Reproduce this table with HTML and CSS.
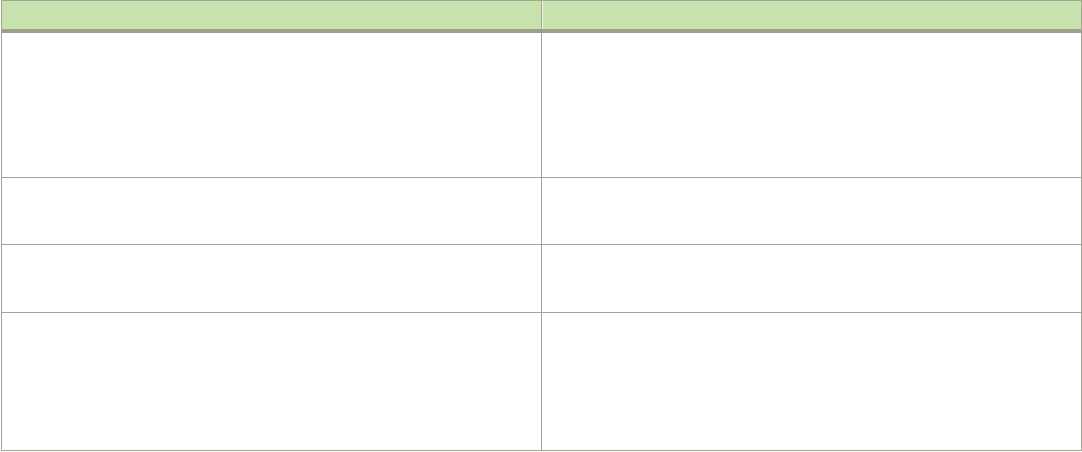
FILE: index.html
```html
<!DOCTYPE html>
<html>
<head>
<meta charset="utf-8">
<link rel="stylesheet" href="styles.css">
</head>
<body>
<div class="table">
  <div class="row head">
    <div class="cell"></div>
    <div class="cell"></div>
  </div>
  <div class="row r1">
    <div class="cell"></div>
    <div class="cell"></div>
  </div>
  <div class="row r2">
    <div class="cell"></div>
    <div class="cell"></div>
  </div>
  <div class="row r3">
    <div class="cell"></div>
    <div class="cell"></div>
  </div>
  <div class="row r4">
    <div class="cell"></div>
    <div class="cell"></div>
  </div>
</div>
</body>
</html>
```

FILE: styles.css
```css
html, body {
  margin: 0;
  padding: 0;
  background: #ffffff;
  font-family: "Liberation Sans", Arial, sans-serif;
}
.table {
  margin-left: 1px;
  width: 1081px;
  box-sizing: border-box;
  border: 1px solid #a3a493;
  border-top-color: #a3a493;
}
.row {
  display: grid;
  grid-template-columns: 540px 1fr;
  border-bottom: 1px solid #a3a493;
}
.row:last-child {
  border-bottom: none;
}
.cell {
  border-right: 1px solid #a3a493;
}
.cell:last-child {
  border-right: none;
}
.head {
  height: 28px;
  background: #c7e2ac;
  border-bottom: 4px solid #9da08d;
}
.head .cell:last-child {
  border-left: 1px solid #eef5e6;
}
.r1 { height: 144px; }
.r2 { height: 66px; }
.r3 { height: 67px; }
.r4 { height: 137px; }
```
